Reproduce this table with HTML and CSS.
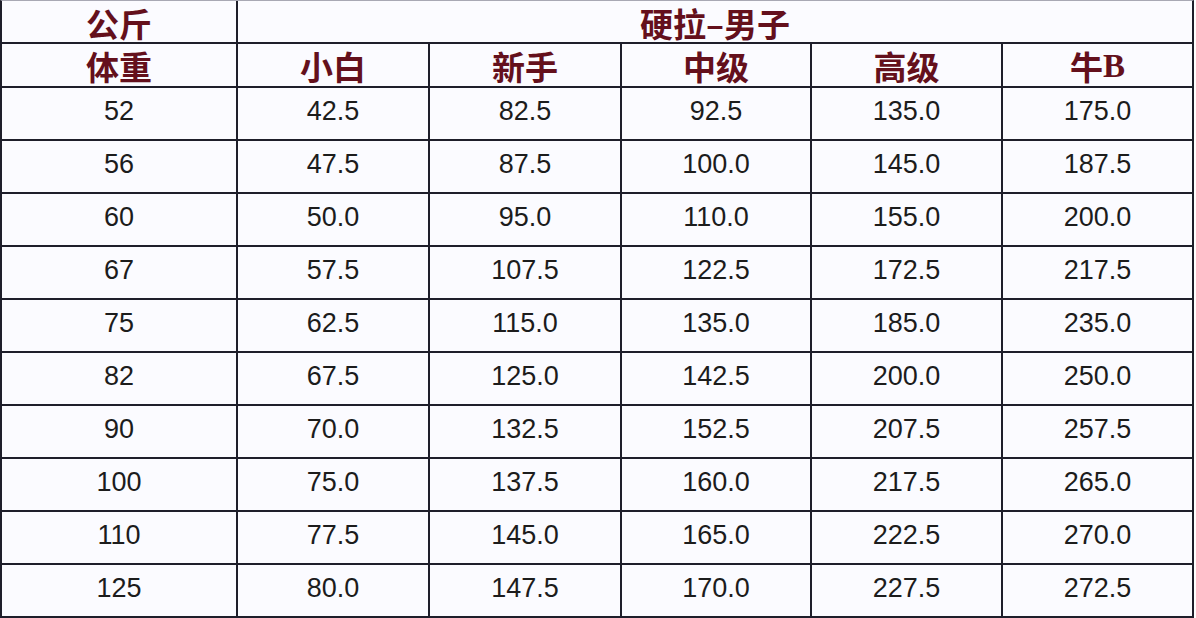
FILE: index.html
```html
<!DOCTYPE html>
<html lang="zh">
<head>
<meta charset="utf-8">
<title>硬拉-男子</title>
<link rel="stylesheet" href="styles.css">
</head>
<body>
<div class="sheet">
  <div class="cell head top">公斤</div>
  <div class="cell head top span">硬拉–男子</div>
  <div class="cell head sub">体重</div>
  <div class="cell head sub">小白</div>
  <div class="cell head sub">新手</div>
  <div class="cell head sub">中级</div>
  <div class="cell head sub">高级</div>
  <div class="cell head sub">牛<span class="latin">B</span></div>

  <div class="cell">52</div><div class="cell">42.5</div><div class="cell">82.5</div><div class="cell">92.5</div><div class="cell">135.0</div><div class="cell">175.0</div>
  <div class="cell">56</div><div class="cell">47.5</div><div class="cell">87.5</div><div class="cell">100.0</div><div class="cell">145.0</div><div class="cell">187.5</div>
  <div class="cell">60</div><div class="cell">50.0</div><div class="cell">95.0</div><div class="cell">110.0</div><div class="cell">155.0</div><div class="cell">200.0</div>
  <div class="cell">67</div><div class="cell">57.5</div><div class="cell">107.5</div><div class="cell">122.5</div><div class="cell">172.5</div><div class="cell">217.5</div>
  <div class="cell">75</div><div class="cell">62.5</div><div class="cell">115.0</div><div class="cell">135.0</div><div class="cell">185.0</div><div class="cell">235.0</div>
  <div class="cell">82</div><div class="cell">67.5</div><div class="cell">125.0</div><div class="cell">142.5</div><div class="cell">200.0</div><div class="cell">250.0</div>
  <div class="cell">90</div><div class="cell">70.0</div><div class="cell">132.5</div><div class="cell">152.5</div><div class="cell">207.5</div><div class="cell">257.5</div>
  <div class="cell">100</div><div class="cell">75.0</div><div class="cell">137.5</div><div class="cell">160.0</div><div class="cell">217.5</div><div class="cell">265.0</div>
  <div class="cell">110</div><div class="cell">77.5</div><div class="cell">145.0</div><div class="cell">165.0</div><div class="cell">222.5</div><div class="cell">270.0</div>
  <div class="cell">125</div><div class="cell">80.0</div><div class="cell">147.5</div><div class="cell">170.0</div><div class="cell">227.5</div><div class="cell">272.5</div>
</div>
</body>
</html>
```

FILE: styles.css
```css
html, body {
  margin: 0;
  padding: 0;
  background: #ffffff;
}

.sheet {
  display: grid;
  grid-template-columns: 234px 190px 190px 188px 189px 189px;
  grid-template-rows: 41px 42px repeat(10, 51px);
  gap: 2px;
  width: max-content;
  background: #1e1e2a;
  border: 2px solid #1e1e2a;
  border-top: 1px solid #a8a8b4;
}

.cell {
  background: #fbfbff;
  display: flex;
  align-items: center;
  justify-content: center;
  font-family: "Liberation Sans", Arial, sans-serif;
  font-size: 27px;
  line-height: 1;
  color: #1c1c1c;
  padding-bottom: 4px;
  box-sizing: border-box;
}

.head {
  font-family: "Noto Sans CJK SC", "Noto Sans", sans-serif;
  font-weight: 700;
  font-size: 33px;
  line-height: 1;
  color: #64101c;
  padding-bottom: 0;
}

.top {
  padding-top: 4px;
}

.sub {
  padding-top: 3px;
}

.span {
  grid-column: 2 / span 5;
}

.latin {
  font-family: "Liberation Serif", "Times New Roman", serif;
  font-weight: 700;
}
```
